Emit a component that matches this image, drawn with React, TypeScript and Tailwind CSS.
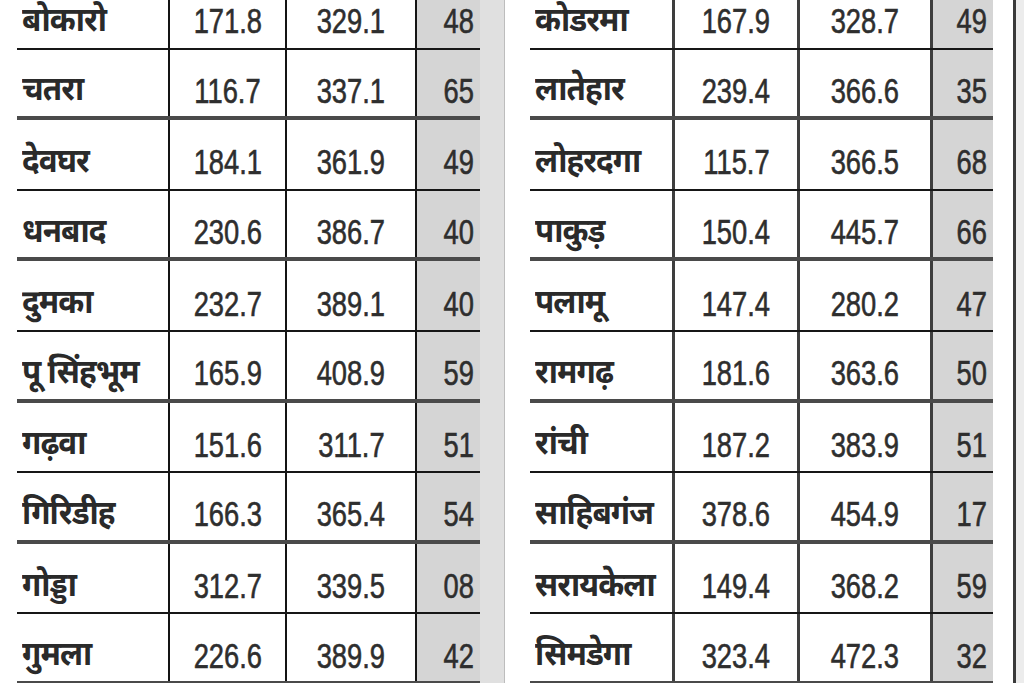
const left = [
  ["बोकारो", "171.8", "329.1", "48"],
  ["चतरा", "116.7", "337.1", "65"],
  ["देवघर", "184.1", "361.9", "49"],
  ["धनबाद", "230.6", "386.7", "40"],
  ["दुमका", "232.7", "389.1", "40"],
  ["पू सिंहभूम", "165.9", "408.9", "59"],
  ["गढ़वा", "151.6", "311.7", "51"],
  ["गिरिडीह", "166.3", "365.4", "54"],
  ["गोड्डा", "312.7", "339.5", "08"],
  ["गुमला", "226.6", "389.9", "42"],
];

const right = [
  ["कोडरमा", "167.9", "328.7", "49"],
  ["लातेहार", "239.4", "366.6", "35"],
  ["लोहरदगा", "115.7", "366.5", "68"],
  ["पाकुड़", "150.4", "445.7", "66"],
  ["पलामू", "147.4", "280.2", "47"],
  ["रामगढ़", "181.6", "363.6", "50"],
  ["रांची", "187.2", "383.9", "51"],
  ["साहिबगंज", "378.6", "454.9", "17"],
  ["सरायकेला", "149.4", "368.2", "59"],
  ["सिमडेगा", "323.4", "472.3", "32"],
];

// no condensed face installed, so numbers get squeezed with scale-x (and a thin stroke for weight)
const num =
  "inline-block scale-x-[0.78] font-['Liberation_Sans',Arial,sans-serif] text-[35px] leading-none text-[#2e2e2e] [-webkit-text-stroke:0.6px_#2e2e2e]";
const nameFont = "font-['Noto_Sans_Devanagari','Noto_Sans',sans-serif]";

function DistrictTable({ rows, cols, vline }: { rows: string[][]; cols: string; vline: string }) {
  return (
    <div className="flex flex-col">
      {rows.map((r, i) => (
        <div
          key={r[0]}
          className={`grid ${cols} h-[70.6px] ${i % 2 === 0 ? "border-b-2 border-[#161616]" : "border-b-4 border-[#4a4a4a]"}`}
        >
          <div className="flex items-center pl-[5px] pt-[18px] whitespace-nowrap">
            <span
              className={`inline-block origin-left scale-x-[0.95] text-[33px] leading-none font-bold text-[#2a2a2a] tracking-[-1px] ${nameFont}`}
            >
              {r[0]}
            </span>
          </div>
          <div className={`flex items-center justify-center pt-[15px] ${vline}`}>
            <span className={num}>{r[1]}</span>
          </div>
          <div className={`flex items-center justify-center pt-[15px] ${vline}`}>
            <span className={num}>{r[2]}</span>
          </div>
          <div className={`flex items-center justify-end pr-[6px] pt-[15px] ${vline} bg-[#d5d5d5]`}>
            <span className={`${num} origin-right`}>{r[3]}</span>
          </div>
        </div>
      ))}
    </div>
  );
}

export default function App() {
  return (
    <div className="h-[683px] w-[1024px] overflow-hidden bg-white">
      <div className="-mt-[21px] flex">
        <div className="w-[17px] shrink-0" />
        <DistrictTable rows={left} cols="grid-cols-[151px_117px_130px_65px]" vline="border-l-2 border-[#141414]" />
        <div className="w-[25px] shrink-0 border-r border-[#bdbdbd] bg-[#e0e0e0]" />
        <div className="w-[25px] shrink-0" />
        <DistrictTable rows={right} cols="grid-cols-[142px_125px_133px_63px]" vline="border-l-[3px] border-[#3e3e3e]" />
        <div className="w-[20px] shrink-0" />
        <div className="w-[3px] shrink-0 bg-[#3a3a3a]" />
        <div className="flex-1 bg-[#ececec]" />
      </div>
    </div>
  );
}
